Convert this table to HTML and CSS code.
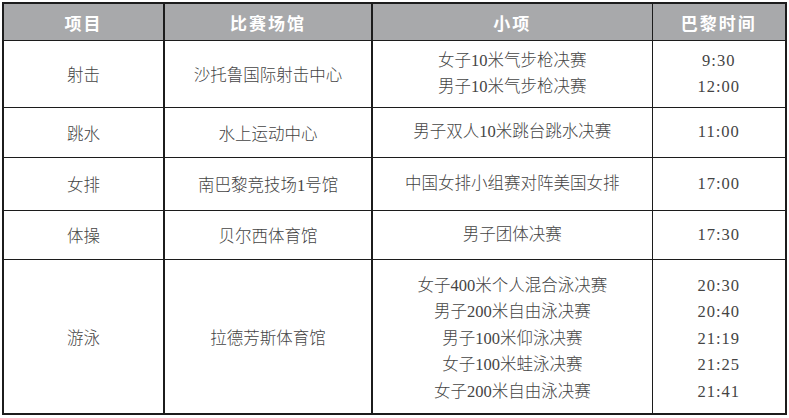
FILE: index.html
```html
<!DOCTYPE html>
<html lang="zh-CN">
<head>
<meta charset="utf-8">
<title>赛程</title>
<link rel="stylesheet" href="styles.css">
</head>
<body>
<table class="schedule">
  <colgroup>
    <col class="c1"><col class="c2"><col class="c3"><col class="c4">
  </colgroup>
  <thead>
    <tr class="head">
      <th>项目</th><th>比赛场馆</th><th>小项</th><th>巴黎时间</th>
    </tr>
  </thead>
  <tbody>
    <tr class="r1">
      <td>射击</td><td>沙托鲁国际射击中心</td>
      <td><div class="line">女子10米气步枪决赛</div><div class="line">男子10米气步枪决赛</div></td>
      <td class="time"><div class="line">9:30</div><div class="line">12:00</div></td>
    </tr>
    <tr class="r2">
      <td>跳水</td><td>水上运动中心</td>
      <td><div class="line">男子双人10米跳台跳水决赛</div></td>
      <td class="time"><div class="line">11:00</div></td>
    </tr>
    <tr class="r3">
      <td>女排</td><td>南巴黎竞技场1号馆</td>
      <td><div class="line">中国女排小组赛对阵美国女排</div></td>
      <td class="time"><div class="line">17:00</div></td>
    </tr>
    <tr class="r4">
      <td>体操</td><td>贝尔西体育馆</td>
      <td><div class="line">男子团体决赛</div></td>
      <td class="time"><div class="line">17:30</div></td>
    </tr>
    <tr class="r5">
      <td>游泳</td><td>拉德芳斯体育馆</td>
      <td class="list">
        <div class="line">女子400米个人混合泳决赛</div>
        <div class="line">男子200米自由泳决赛</div>
        <div class="line">男子100米仰泳决赛</div>
        <div class="line">女子100米蛙泳决赛</div>
        <div class="line">女子200米自由泳决赛</div>
      </td>
      <td class="time list">
        <div class="line">20:30</div>
        <div class="line">20:40</div>
        <div class="line">21:19</div>
        <div class="line">21:25</div>
        <div class="line">21:41</div>
      </td>
    </tr>
  </tbody>
</table>
</body>
</html>
```

FILE: styles.css
```css
html, body {
  margin: 0;
  padding: 0;
  background: #ffffff;
}
body {
  padding: 2px 0 0 2px;
}
.schedule {
  border-collapse: collapse;
  table-layout: fixed;
  width: 783px;
  border: 2px solid #1c1c1c;
  font-family: "Liberation Serif", "Noto Sans CJK SC", serif;
  color: #444444;
}
.c1 { width: 161px; }
.c2 { width: 208px; }
.c3 { width: 280px; }
.c4 { width: 134px; }
.schedule th,
.schedule td {
  padding: 0;
  text-align: center;
  vertical-align: middle;
  border: 1px solid #1c1c1c;
}
.schedule th:nth-child(1), .schedule td:nth-child(1),
.schedule th:nth-child(2), .schedule td:nth-child(2) {
  border-right-width: 2px;
}
.head th {
  background: #a8a9ab;
  color: #ffffff;
  font-family: "Noto Sans CJK SC", sans-serif;
  font-weight: 700;
  font-size: 17px;
  letter-spacing: 2px;
  height: 36px;
}
.schedule td {
  font-size: 16.5px;
  font-weight: 300;
}
.line {
  line-height: 26.5px;
}
.time {
  letter-spacing: 1px;
}
.r1 td { height: 66px; }
.r2 td { height: 49px; }
.r3 td { height: 52px; }
.r4 td { height: 48px; }
.r5 td { height: 153px; }
.schedule .r5 td.list {
  height: 148px;
  padding-top: 5px;
}
```
